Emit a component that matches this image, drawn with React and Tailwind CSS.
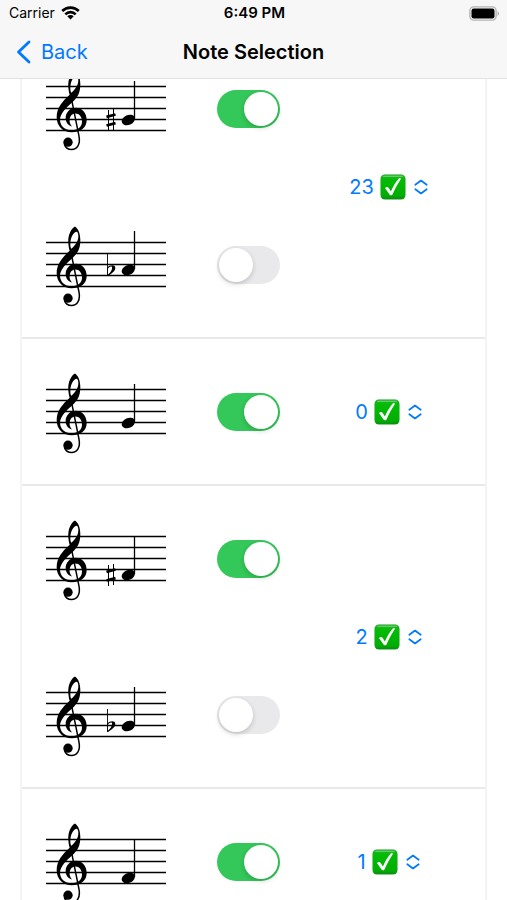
import { useState } from "react";

// Vertical position of each note head on the 120x101 staff drawing
const NOTE_Y = { A: 56, G: 62, F: 67 };

const rows = [
  {
    correct: 23,
    notes: [
      { name: "G", accidental: "sharp", enabled: true },
      { name: "A", accidental: "flat", enabled: false },
    ],
  },
  {
    correct: 0,
    notes: [{ name: "G", enabled: true }],
  },
  {
    correct: 2,
    notes: [
      { name: "F", accidental: "sharp", enabled: true },
      { name: "G", accidental: "flat", enabled: false },
    ],
  },
  {
    correct: 1,
    notes: [{ name: "F", enabled: true }],
  },
];

function TrebleClef() {
  return (
    <g transform="translate(-10 4.2) scale(0.3333)">
      <path
        fillRule="evenodd"
        d="M117 25 C104 32 95 53 97 76 C98 86 99 92 101 98 C80 117 62 137 62 165 C62 192 82 210 107 210 C134 210 152 196 152 174 C152 152 138 137 120 137 C101 137 89 152 89 168 C89 180 96 189 108 193 C102 186 100 180 101 172 C102 161 109 154 118 154 C130 154 138 164 138 178 C138 194 127 204 107 204 C86 204 72 191 72 172 C73 153 91 136 109 120 C125 105 133 92 133 66 C133 46 127 32 117 25 Z M121 41 C111 44 103 60 103 78 C103 84 104 88 106 92 C118 81 127 69 127 54 C127 46 125 41 121 41 Z"
      />
      <path
        d="M104 98 L129 222 C134 248 122 262 107 262 C96 262 88 255 85 246"
        fill="none"
        stroke="black"
        strokeWidth="4.5"
      />
      <circle cx="96" cy="240" r="14" />
    </g>
  );
}

function Sharp({ y }) {
  return (
    <g transform={`translate(65 ${y})`} stroke="black">
      <path d="M-2.5 -10 V11 M2.5 -11 V10" strokeWidth="1" />
      <path d="M-4.5 -3.1 L4.5 -5.5 M-4.5 5.5 L4.5 3.1" strokeWidth="2.8" />
    </g>
  );
}

function Flat({ y }) {
  return (
    <g transform={`translate(61.5 ${y})`}>
      <path d="M0 -17 V6" stroke="black" strokeWidth="0.9" />
      <path
        fillRule="evenodd"
        d="M0 -2.5 C2 -5 7.8 -6 7.8 -2 C7.8 1.5 3.5 4 0 6.3 Z M0.5 -1.5 V4.5 C3 2.5 4.6 0 4.6 -2 C4.6 -4.4 2 -3.6 0.5 -1.5 Z"
      />
    </g>
  );
}

function Staff({ note }) {
  const y = NOTE_Y[note.name];
  return (
    <svg
      width="120"
      height="101"
      viewBox="0 0 120 101"
      role="img"
      aria-label={`${note.name} ${note.accidental || "natural"}`}
    >
      <path
        d="M0 28.5 H120 M0 39.5 H120 M0 50.5 H120 M0 61.5 H120 M0 72.5 H120"
        stroke="black"
        strokeWidth="1.4"
      />
      <TrebleClef />
      {note.accidental === "sharp" && <Sharp y={y} />}
      {note.accidental === "flat" && <Flat y={y} />}
      <ellipse
        cx="82.3"
        cy={y}
        rx="6.9"
        ry="4.9"
        transform={`rotate(-24 82.3 ${y})`}
      />
      <path d={`M88.5 ${y - 39} V${y - 1}`} stroke="black" strokeWidth="1.3" />
    </svg>
  );
}

function Toggle({ label, defaultChecked }) {
  const [checked, setChecked] = useState(defaultChecked);
  return (
    <input
      type="checkbox"
      role="switch"
      aria-label={label}
      checked={checked}
      onChange={(e) => setChecked(e.target.checked)}
      className="block h-[38px] w-[63px] cursor-pointer appearance-none rounded-full bg-[#e9e9eb] p-[2px] transition-colors before:block before:size-[34px] before:rounded-full before:bg-white before:shadow-[0_2px_5px_rgba(0,0,0,0.18)] before:content-[''] checked:bg-[#34c759] checked:before:ml-[25px]"
    />
  );
}

function CheckMark() {
  return (
    <svg width="26" height="26" viewBox="0 0 26 26" aria-hidden="true">
      <defs>
        <linearGradient id="tile" x1="0" y1="0" x2="0" y2="1">
          <stop offset="0" stopColor="#1fb425" />
          <stop offset="0.2" stopColor="#02bc04" />
          <stop offset="0.85" stopColor="#02ae03" />
          <stop offset="1" stopColor="#0a8f12" />
        </linearGradient>
      </defs>
      <rect x="0.5" y="0.5" width="25" height="25" rx="4.5" fill="#129a1c" />
      <rect x="1" y="1.5" width="24" height="23.5" rx="4" fill="url(#tile)" />
      <path
        d="M3.5 2.2 H22.5"
        stroke="#7fdc80"
        strokeWidth="1"
        strokeLinecap="round"
      />
      <path
        d="M5 14 C6.2 12.6 7.9 12.7 8.7 14 L10.9 17.4 C13 12.7 15.4 8.3 18.8 4.5 C19.7 3.6 21.2 4.2 20.6 5.4 C17.3 10.3 14.6 15.3 12.5 20.4 C11.9 21.6 10.2 21.7 9.5 20.6 Z"
        fill="white"
      />
    </svg>
  );
}

function CountPicker({ label, defaultValue }) {
  const [value, setValue] = useState(defaultValue);
  return (
    <label className="flex items-center text-xl text-[#007aff]">
      <select
        aria-label={label}
        value={value}
        onChange={(e) => setValue(e.target.value)}
        className="field-sizing-content cursor-pointer appearance-none bg-transparent"
      >
        {[0, 1, 2, 5, 10, 23].map((n) => (
          <option key={n} value={n}>
            {n}
          </option>
        ))}
      </select>
      <span className="ml-1.5 mr-2">
        <CheckMark />
      </span>
      <svg
        width="14"
        height="16"
        viewBox="0 0 14 16"
        fill="none"
        stroke="currentColor"
        strokeWidth="1.7"
        strokeLinecap="round"
        strokeLinejoin="round"
        aria-hidden="true"
      >
        <path d="M1.3 5.8 L7 1.5 L12.7 5.8 M1.3 10.2 L7 14.5 L12.7 10.2" />
      </svg>
    </label>
  );
}

function StatusBar() {
  return (
    <div className="grid h-[26px] grid-cols-3 items-center pl-[9px] pr-[7px] text-sm">
      <div className="flex items-center gap-1.5">
        <span>Carrier</span>
        <svg width="19" height="14" viewBox="0 0 19 14" aria-label="Wi-Fi">
          <g fill="none" stroke="black" strokeWidth="2.6">
            <path d="M1.2 5 A11.8 11.8 0 0 1 17.8 5" />
            <path d="M4.3 8.3 A7.4 7.4 0 0 1 14.7 8.3" />
          </g>
          <path d="M6.3 10.3 A4.5 4.5 0 0 1 12.7 10.3 L9.5 13.6 Z" />
        </svg>
      </div>
      <span className="text-center text-[15px] font-semibold">6:49 PM</span>
      <svg
        className="ml-auto"
        width="31"
        height="15"
        viewBox="0 0 31 15"
        aria-label="Battery full"
      >
        <rect
          x="0.9"
          y="0.9"
          width="26.2"
          height="13.2"
          rx="3.8"
          fill="none"
          stroke="#b4b4b4"
          strokeWidth="1.4"
        />
        <rect x="2.5" y="2.5" width="23" height="10" rx="2.2" />
        <path d="M28.5 5.2 C30.6 6 30.6 9 28.5 9.8 Z" fill="#b4b4b4" />
      </svg>
    </div>
  );
}

function NavBar() {
  return (
    <nav className="grid h-[52px] grid-cols-[1fr_auto_1fr] items-center px-4 text-xl">
      <a href="#back" className="flex items-center gap-2.5 text-[#007aff]">
        <svg
          width="15"
          height="24"
          viewBox="0 0 15 24"
          fill="none"
          stroke="currentColor"
          strokeWidth="2.8"
          strokeLinecap="round"
          strokeLinejoin="round"
          aria-hidden="true"
        >
          <path d="M13 2 L2.5 12 L13 22" />
        </svg>
        Back
      </a>
      <h1 className="font-semibold">Note Selection</h1>
    </nav>
  );
}

export default function App() {
  return (
    <div className="flex h-screen flex-col overflow-hidden bg-white font-['Inter','Liberation_Sans',sans-serif] text-black">
      <header className="relative z-10 flex-none border-b border-[#e2e2e2] bg-[#f7f7f7]">
        <StatusBar />
        <NavBar />
      </header>

      {/* The list is scrolled partly under the header */}
      <main className="-mt-[43px] mx-5 flex-none border-x-2 border-[#f4f4f5]">
        {rows.map((row, index) => (
          <section
            key={index}
            className="grid grid-cols-[2fr_1fr] items-center border-b-2 border-[#e9e9ea] py-[22px] pl-[14px] pr-[26px]"
          >
            <div className="flex flex-col gap-[55px] pl-[10px] pr-[38px]">
              {row.notes.map((note) => (
                <div
                  key={note.name}
                  className="flex items-center justify-between"
                >
                  <Staff note={note} />
                  <Toggle
                    label={`${note.name} ${note.accidental || "natural"}`}
                    defaultChecked={note.enabled}
                  />
                </div>
              ))}
            </div>
            <div className="flex justify-center">
              <CountPicker
                label="Correct answers"
                defaultValue={row.correct}
              />
            </div>
          </section>
        ))}
      </main>
    </div>
  );
}
